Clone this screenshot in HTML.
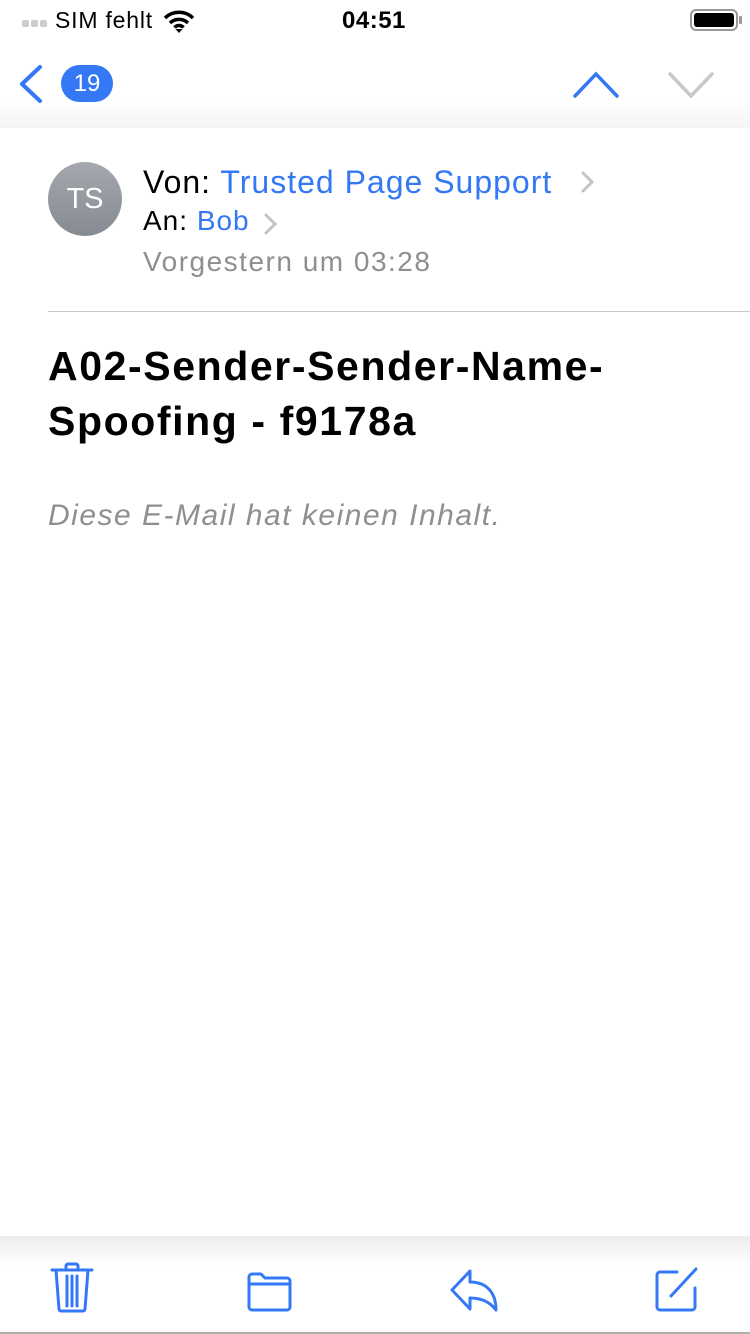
<!DOCTYPE html>
<html><head><meta charset="utf-8"><style>
*{margin:0;padding:0;box-sizing:border-box}
body{width:750px;height:1334px;background:#fff;font-family:"Liberation Sans",sans-serif;position:relative;overflow:hidden}
.a{position:absolute;white-space:nowrap}
.blue{color:#3478f6}
</style></head><body>
<div class="a" style="left:0;top:0;width:750px;height:128px;background:linear-gradient(#fff 0,#fff 100px,#f4f4f4 128px)"></div>
<div class="a" style="left:22px;top:20px;width:7px;height:7px;border-radius:2px;background:#ccc"></div>
<div class="a" style="left:31px;top:20px;width:7px;height:7px;border-radius:2px;background:#ccc"></div>
<div class="a" style="left:40px;top:20px;width:7px;height:7px;border-radius:2px;background:#ccc"></div>
<div class="a" style="left:55px;top:7px;font-size:23px;color:#000;letter-spacing:0.8px">SIM fehlt</div>
<svg class="a" style="left:163px;top:9px" width="32" height="24" viewBox="0 0 32 24"><path d="M2 9a20 20 0 0 1 28 0M7 14a13 13 0 0 1 18 0M11.5 18.5a6 6 0 0 1 9 0" stroke="#000" stroke-width="3.5" fill="none"/><path d="M16 24l-3.5-4h7z" fill="#000"/></svg>
<div class="a" style="left:342px;top:7px;font-size:24px;font-weight:bold;color:#000;letter-spacing:0.5px">04:51</div>
<div class="a" style="left:690px;top:9px;width:48px;height:22px;border:2px solid #999;border-radius:6px;padding:2px"><div style="width:100%;height:100%;background:#000;border-radius:3px"></div></div>
<div class="a" style="left:739px;top:16px;width:3px;height:8px;background:#999;border-radius:1px"></div>
<svg class="a" style="left:16px;top:64px" width="28" height="40" viewBox="0 0 28 40"><path d="M24 3L6 20l18 17" stroke="#3478f6" stroke-width="4" fill="none" stroke-linecap="round" stroke-linejoin="round"/></svg>
<div class="a" style="left:61px;top:65px;width:52px;height:37px;border-radius:19px;background:#3478f6;color:#fff;font-size:24px;text-align:center;line-height:37px">19</div>
<svg class="a" style="left:572px;top:70px" width="48" height="30" viewBox="0 0 48 30"><path d="M3 26L24 4l21 22" stroke="#3478f6" stroke-width="3.5" fill="none" stroke-linecap="round"/></svg>
<svg class="a" style="left:667px;top:70px" width="48" height="30" viewBox="0 0 48 30"><path d="M3 4l21 22L45 4" stroke="#c8c8c8" stroke-width="3.5" fill="none" stroke-linecap="round"/></svg>
<div class="a" style="left:48px;top:162px;width:74px;height:74px;border-radius:50%;background:linear-gradient(#a5a8ae,#868a92);color:#fff;font-size:29px;text-align:center;line-height:74px">TS</div>
<div class="a" style="left:143px;top:164px;font-size:32px;color:#000;letter-spacing:1.0px">Von: <span class="blue">Trusted Page Support</span></div>
<svg class="a" style="left:580px;top:170px" width="16" height="24" viewBox="0 0 16 24"><path d="M3 3l9 9-9 9" stroke="#c4c4c6" stroke-width="3" fill="none" stroke-linecap="round"/></svg>
<div class="a" style="left:143px;top:205px;font-size:28px;color:#000;letter-spacing:1px">An: <span class="blue">Bob</span></div>
<svg class="a" style="left:263px;top:212px" width="16" height="24" viewBox="0 0 16 24"><path d="M3 3l9 9-9 9" stroke="#c4c4c6" stroke-width="3" fill="none" stroke-linecap="round"/></svg>
<div class="a" style="left:143px;top:246px;font-size:28px;color:#8e8e93;letter-spacing:1.5px">Vorgestern um 03:28</div>
<div class="a" style="left:48px;top:311px;width:702px;height:1px;background:#c8c8cc"></div>
<div class="a" style="left:48px;top:339px;font-size:41px;font-weight:bold;color:#000;line-height:55px;letter-spacing:1.6px">A02-Sender-Sender-Name-<br>Spoofing - f9178a</div>
<div class="a" style="left:48px;top:499px;font-size:30px;font-style:italic;color:#8e8e93;letter-spacing:1.5px">Diese E-Mail hat keinen Inhalt.</div>
<div class="a" style="left:0;top:1236px;width:750px;height:30px;background:linear-gradient(#ededed,#fff)"></div>
<div class="a" style="left:0;top:1332px;width:750px;height:2px;background:#b0b0b0"></div>
<svg class="a" style="left:48px;top:1262px" width="48" height="52" viewBox="0 0 48 52"><path d="M4 8h40M18 8V4a2 2 0 0 1 2-2h8a2 2 0 0 1 2 2v4M8 8l3 39a2 2 0 0 0 2 2h22a2 2 0 0 0 2-2l3-39M19 14v30M24 14v30M29 14v30" stroke="#3478f6" stroke-width="3" fill="none" stroke-linecap="round"/></svg>
<svg class="a" style="left:244px;top:1270px" width="54" height="42" viewBox="0 0 54 42"><path d="M5 7a3 3 0 0 1 3-3h9l4 4h22a3 3 0 0 1 3 3v26a3 3 0 0 1-3 3H8a3 3 0 0 1-3-3zM5 14h42" stroke="#3478f6" stroke-width="3" fill="none" stroke-linejoin="round"/></svg>
<svg class="a" style="left:446px;top:1268px" width="54" height="46" viewBox="0 0 54 46"><path d="M24 3L6 22l18 19V30c12 0 20 4 26 12 0-18-10-28-26-28z" stroke="#3478f6" stroke-width="3" fill="none" stroke-linejoin="round"/></svg>
<svg class="a" style="left:652px;top:1266px" width="48" height="48" viewBox="0 0 48 48"><path d="M25 6H8a3 3 0 0 0-3 3v32a3 3 0 0 0 3 3h32a3 3 0 0 0 3-3V22" stroke="#3478f6" stroke-width="3" fill="none" stroke-linecap="round"/><path d="M44 3L19 30" stroke="#3478f6" stroke-width="3" stroke-linecap="round"/></svg>
</body></html>
